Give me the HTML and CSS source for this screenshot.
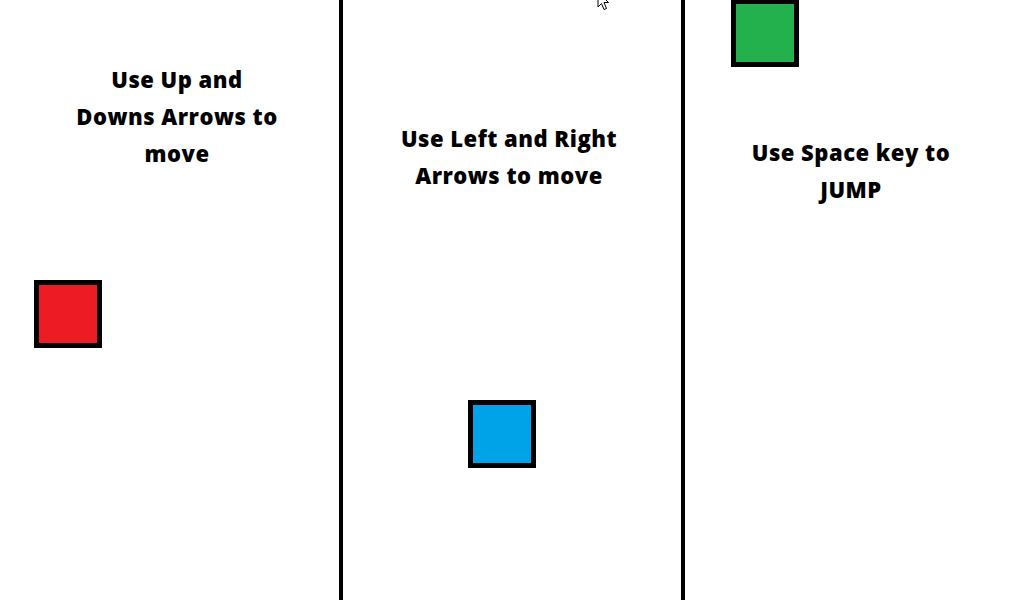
FILE: index.html
```html
<!DOCTYPE html>
<html lang="en">
<head>
<meta charset="utf-8">
<title>Controls</title>
<link rel="stylesheet" href="styles.css">
</head>
<body>
<main class="stage">
  <section class="col col-one">
    <p class="hint">Use Up and<br>Downs Arrows to<br>move</p>
    <div class="sprite sprite-red"></div>
  </section>
  <section class="col col-two">
    <p class="hint">Use Left and Right<br>Arrows to move</p>
    <div class="sprite sprite-blue"></div>
    <svg class="cursor" width="13" height="20" viewBox="0 0 13 20" aria-hidden="true">
      <path d="M1 1 L1 16 L4.5 12.5 L7 18.5 L9.5 17.5 L7 11.5 L11.5 11.5 Z" fill="#fff" stroke="#000" stroke-width="1" stroke-linejoin="miter"/>
    </svg>
  </section>
  <section class="col col-three">
    <p class="hint">Use Space key to<br>JUMP</p>
    <div class="sprite sprite-green"></div>
  </section>
</main>
</body>
</html>
```
FILE: styles.css
```css
html, body {
  margin: 0;
  padding: 0;
  background: #fff;
}
.stage {
  display: flex;
  width: 1024px;
  height: 600px;
  overflow: hidden;
  font-family: "Open Sans", "DejaVu Sans", sans-serif;
}
.col {
  position: relative;
  box-sizing: border-box;
  height: 600px;
}
.col-one {
  width: 343px;
  border-right: 4px solid #000;
  padding-left: 15px;
  padding-top: 61px;
}
.col-two {
  width: 342px;
  border-right: 4px solid #000;
  padding-right: 6px;
  padding-top: 120px;
}
.col-three {
  flex: 1;
  padding-right: 7px;
  padding-top: 134px;
}
.hint {
  margin: 0;
  text-align: center;
  font-weight: 800;
  font-size: 22px;
  letter-spacing: 0.5px;
  line-height: 37px;
  color: #000;
}
.sprite {
  position: absolute;
  box-sizing: border-box;
  width: 68px;
  height: 68px;
  border: 5px solid #000;
}
.sprite-red {
  left: 34px;
  top: 280px;
  background: #ed1c24;
}
.sprite-blue {
  left: 125px;
  top: 400px;
  background: #00a2e8;
}
.sprite-green {
  left: 46px;
  top: -1px;
  background: #22b14c;
}
.cursor {
  position: absolute;
  left: 254px;
  top: -9px;
}
```
